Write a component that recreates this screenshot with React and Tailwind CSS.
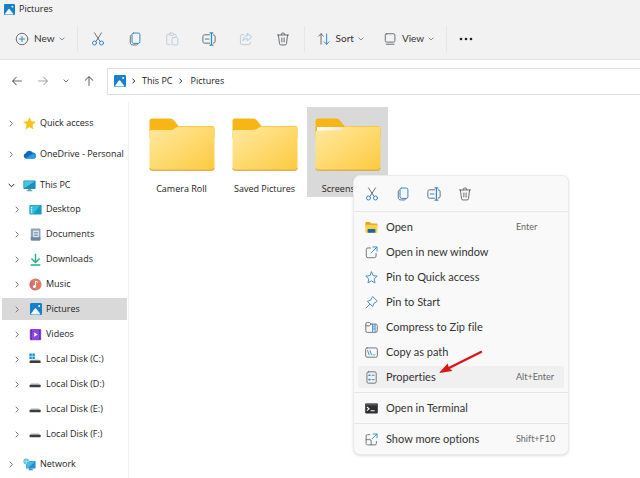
import { useState } from 'react'

const GREY = '#666a6f'
const BLUE = '#2f86c5'

function Icon({ size = 14, box = 16, children }) {
  return (
    <svg width={size} height={size} viewBox={`0 0 ${box} ${box}`} fill="none" stroke={GREY} strokeWidth="1.1"
      strokeLinecap="round" strokeLinejoin="round" className="shrink-0" aria-hidden="true">
      {children}
    </svg>
  )
}

function Chevron({ dir = 'right', size = 6, color = '#6e6e6e', width = 1 }) {
  const d = dir === 'right' ? 'M2 0.8 L5 4 L2 7.2' : 'M0.8 2.2 L4 5.4 L7.2 2.2'
  return (
    <svg width={size} height={size} viewBox="0 0 8 8" fill="none" stroke={color} strokeWidth={width * 8 / size}
      className="shrink-0" aria-hidden="true">
      <path d={d} />
    </svg>
  )
}

const CutIcon = () => (
  <Icon>
    <path d="M4 1 L10.2 10.6 M12 1 L5.8 10.6" />
    <circle cx="4" cy="12.6" r="2.3" stroke={BLUE} />
    <circle cx="12" cy="12.6" r="2.3" stroke={BLUE} />
  </Icon>
)

const CopyIcon = () => (
  <Icon>
    <path d="M3.8 3.4 C2.8 3.8 2.6 4.4 2.6 5.2 V11.6 C2.6 13.8 3.6 14.8 5.6 14.8 H9.4 C10.6 14.8 11.2 14.4 11.6 13.4" />
    <rect x="4.6" y="1.2" width="9" height="11.8" rx="1.8" stroke={BLUE} />
  </Icon>
)

const PasteIcon = () => (
  <Icon>
    <g stroke="#c3c9cf">
      <path d="M6 14.5 H3.2 A1.2 1.2 0 0 1 2 13.3 V3.8 A1.2 1.2 0 0 1 3.2 2.6 H5 M9.6 2.6 H11.4 A1.2 1.2 0 0 1 12.6 3.8 V5" />
      <rect x="5" y="1.2" width="4.8" height="2.6" rx="1.2" />
      <rect x="8" y="6.4" width="6.6" height="8.4" rx="1.2" stroke="#b4d0e6" />
    </g>
  </Icon>
)

const RenameIcon = () => (
  <Icon>
    <path d="M8.6 3.2 H3 A2 2 0 0 0 1 5.2 V10.8 A2 2 0 0 0 3 12.8 H8.6" />
    <path d="M13 3.2 A2 2 0 0 1 15 5.2 V10.8 A2 2 0 0 1 13 12.8" />
    <path d="M9.2 1 H12.4 M9.2 15 H12.4 M10.8 1 V15 M3.8 8 H8" stroke={BLUE} strokeWidth="1.4" />
  </Icon>
)

const ShareIcon = () => (
  <Icon>
    <path d="M5.6 3 H3.6 A2 2 0 0 0 1.6 5 V12.4 A2 2 0 0 0 3.6 14.4 H11 A2 2 0 0 0 13 12.4 V11.6" stroke="#c3c9cf" />
    <path d="M9.6 1.6 L14.6 5.8 L9.6 10 V7.6 C7.2 7.4 5.8 8.2 4.4 10 C4.8 6.6 6.6 4.4 9.6 4.2 Z" stroke="#a9cbe5" />
  </Icon>
)

const DeleteIcon = () => (
  <Icon>
    <path d="M1.6 3.4 H14.4 M5.8 3.2 A2.2 2.2 0 0 1 10.2 3.2 M2.8 3.6 L4 13.4 A1.6 1.6 0 0 0 5.6 14.8 H10.4 A1.6 1.6 0 0 0 12 13.4 L13.2 3.6 M6.7 6.8 V11.4 M9.3 6.8 V11.4" />
  </Icon>
)

const NewIcon = () => (
  <Icon>
    <circle cx="8" cy="8" r="6.6" />
    <path d="M8 5 V11 M5 8 H11" stroke={BLUE} />
  </Icon>
)

const SortIcon = () => (
  <Icon>
    <path d="M4.6 13.8 V2 M1.8 4.8 L4.6 2 L7.4 4.8" />
    <path d="M11 2.2 V14 M8.2 11.2 L11 14 L13.8 11.2" stroke={BLUE} />
  </Icon>
)

const ViewIcon = () => (
  <Icon>
    <rect x="2.6" y="2" width="11" height="9.6" rx="1.6" />
    <path d="M3.6 14 H12.6" />
  </Icon>
)

function PictureIcon({ size = 12 }) {
  return (
    <svg width={size} height={size} viewBox="0 0 12 12" className="shrink-0" aria-hidden="true">
      <rect width="12" height="12" rx="1.2" fill="#1680cc" />
      <path d="M0.8 11 L4.9 5.6 Q5.5 4.9 6.1 5.6 L10.4 11 Q10 11.4 9.4 11.4 H1.8 Q1 11.4 0.8 11 Z" fill="#f2f9fe" />
      <circle cx="9.2" cy="2.9" r="1" fill="#f2f9fe" />
    </svg>
  )
}

function Small({ children }) {
  return <svg width="13" height="13" viewBox="0 0 13 13" className="shrink-0" aria-hidden="true">{children}</svg>
}

const StarIcon = () => (
  <Small>
    <path d="M6.5 0.8 L8.2 4.6 L12.3 5 L9.2 7.8 L10.1 12 L6.5 9.8 L2.9 12 L3.8 7.8 L0.7 5 L4.8 4.6 Z" fill="#fcc21b" stroke="#fcc21b" strokeWidth="0.6" strokeLinejoin="round" />
  </Small>
)

const CloudIcon = () => (
  <Small>
    <path d="M3 10.6 A2.8 2.8 0 0 1 2.6 5.2 A4 4 0 0 1 9.6 4.6 A3 3 0 0 1 10.4 10.6 Z" fill="#0f6cbd" />
    <path d="M2.4 10.4 L9 6.2 A2.6 2.6 0 1 1 10.4 10.8 H3.2 Z" fill="#2a9be8" />
  </Small>
)

const PcIcon = () => (
  <Small>
    <rect x="0.4" y="1.4" width="12.2" height="8.6" rx="0.8" fill="#1b8fb8" />
    <path d="M1.2 2.2 H11.8 L1.2 9.2 Z" fill="#45c7e0" />
    <path d="M5 10 H8 V11.4 H5 Z" fill="#8ea3ae" />
    <path d="M3.6 11.3 H9.4 V12.2 H3.6 Z" fill="#657882" />
  </Small>
)

const DesktopIcon = () => (
  <Small>
    <rect x="0.4" y="2" width="12.2" height="9.4" rx="1" fill="#169bc4" />
    <path d="M0.8 2.4 H11 L4 11 H0.8 Z" fill="#35bfdc" />
    <path d="M2 4 H3.2 V5.2 H2 Z M2 6.2 H3.2 V7.4 H2 Z M2 8.4 H3.2 V9.6 H2 Z" fill="#fff" />
  </Small>
)

const DocumentIcon = () => (
  <Small>
    <rect x="1.8" y="0.6" width="9.6" height="11.8" rx="1" fill="#8ea2ba" />
    <path d="M1.8 9 H11.4 V11.4 Q11.4 12.4 10.4 12.4 H2.8 Q1.8 12.4 1.8 11.4 Z" fill="#70869f" />
    <rect x="4.2" y="2.6" width="5.6" height="6.6" fill="#e6eef6" />
    <path d="M5 4.4 H9 M5 6 H9 M5 7.6 H9" stroke="#6f87a6" strokeWidth="0.8" />
  </Small>
)

const DownloadIcon = () => (
  <Small>
    <path d="M6.5 0.8 V9.4 M2.4 5.6 L6.5 9.6 L10.6 5.6 M1.6 12 H11.4" fill="none" stroke="#1fae8c" strokeWidth="1.4" />
  </Small>
)

const MusicIcon = () => (
  <Small>
    <circle cx="6.5" cy="6.5" r="6" fill="#dc7b62" />
    <path d="M2.2 2.3 A6 6 0 0 0 6.5 12.5 Z" fill="#c25f8b" opacity="0.5" />
    <circle cx="5.4" cy="8.6" r="1.5" fill="#fff" />
    <path d="M6.5 8.6 V3 L9 4.3" fill="none" stroke="#fff" strokeWidth="1" />
  </Small>
)

const VideoIcon = () => (
  <Small>
    <rect x="0.8" y="1" width="11.4" height="11.2" rx="1.2" fill="#8a46dd" />
    <path d="M2.4 2 V12 M10.6 2 V12" stroke="#55229f" strokeWidth="1.2" strokeDasharray="1.4 1.2" />
    <path d="M5.2 4.4 L8.8 6.6 L5.2 8.8 Z" fill="#fff" />
  </Small>
)

const DiskIcon = () => (
  <Small>
    <path d="M2 5.2 H10 L11 7.4 H1 Z" fill="#c9c9c9" />
    <rect x="0.6" y="6.8" width="11" height="2.4" rx="0.5" fill="#3a3d40" />
  </Small>
)

const SystemDiskIcon = () => (
  <Small>
    <path d="M0.4 0.6 H2.8 V3 H0.4 Z M3.4 0.6 H5.8 V3 H3.4 Z M0.4 3.6 H2.8 V6 H0.4 Z M3.4 3.6 H5.8 V6 H3.4 Z" fill="#168fdc" />
    <path d="M2.4 6.4 H10 L11 8.2 H1.4 Z" fill="#c9c9c9" />
    <rect x="0.6" y="7.6" width="11" height="2.4" rx="0.5" fill="#3a3d40" />
  </Small>
)

const NetworkIcon = () => (
  <Small>
    <rect x="3" y="3" width="9.6" height="7.4" rx="0.6" fill="#2193cc" />
    <path d="M3.4 3.4 H12 L5 10 H3.4 Z" fill="#4dbbe6" />
    <path d="M6 10.4 H9.4 L10 12.2 H5.4 Z" fill="#4b88aa" />
    <circle cx="3.2" cy="3.4" r="2.8" fill="#55b9dd" />
    <path d="M0.6 3.4 H5.8 M3.2 0.8 V6" stroke="#e2f5fc" strokeWidth="0.6" />
  </Small>
)

const OpenIcon = () => (
  <Small>
    <path d="M0.4 1.8 Q0.4 1 1.2 1 H4.6 L6 2.4 H11.6 Q12.4 2.4 12.4 3.2 V6 H0.4 Z" fill="#e5a50f" />
    <rect x="0.4" y="3.8" width="12" height="8" rx="0.8" fill="#fcd04b" />
    <path d="M2.6 11.8 V9 Q2.6 8 3.6 8 H9.4 Q10.4 8 10.4 9 V11.8 Z" fill="#1a679f" />
  </Small>
)

const NewWindowIcon = () => (
  <Icon size={13}>
    <path d="M6.8 2.4 H3.6 A2 2 0 0 0 1.6 4.4 V12.4 A2 2 0 0 0 3.6 14.4 H11.6 A2 2 0 0 0 13.6 12.4 V9.2" />
    <path d="M9.6 1.2 H14.8 V6.4 M14.6 1.4 L7.4 8.6" stroke={BLUE} />
  </Icon>
)

const PinQuickIcon = () => (
  <Icon size={13}>
    <path d="M8 1.2 L10.1 5.7 L15 6.3 L11.4 9.7 L12.3 14.6 L8 12.2 L3.7 14.6 L4.6 9.7 L1 6.3 L5.9 5.7 Z" stroke={BLUE} />
  </Icon>
)

const PinStartIcon = () => (
  <Icon size={13}>
    <path d="M9.8 1 L15 6.2 L13.8 7.4 L11 9 L9.4 13 L3 6.6 L7 5 L8.6 2.2 Z" stroke={BLUE} />
    <path d="M5.8 10.2 L1.2 14.8" />
  </Icon>
)

const ZipIcon = () => (
  <Icon size={13}>
    <path d="M8.6 14 H2.8 A1.8 1.8 0 0 1 1 12.2 V3.6 A1.8 1.8 0 0 1 2.8 1.8 H5.4 L7.4 3.8 H13.2 A1.8 1.8 0 0 1 15 5.6 V12.2 A1.8 1.8 0 0 1 13.2 14 H12.6 M1 6 H5.4 L7.4 3.8" />
    <path d="M9.4 4 V14 H12.4 V4 M11 6 V7.4 M11 9 V10.4" stroke={BLUE} />
  </Icon>
)

const CopyPathIcon = () => (
  <Icon size={13}>
    <rect x="0.8" y="2.4" width="14.4" height="11.4" rx="1.8" />
    <path d="M3.2 5.6 L5 10.8 M6.2 5.6 L8 10.8 M10 10.8 H10.2 M12 10.8 H12.2" stroke={BLUE} />
  </Icon>
)

const PropertiesIcon = () => (
  <Icon size={13}>
    <rect x="2.4" y="1" width="11.4" height="14" rx="1.8" />
    <path d="M5 5.2 H6 M5 10.6 H6" stroke={BLUE} strokeWidth="2" />
    <path d="M8.8 5.2 H11.2 M8.8 10.6 H11.2" stroke={BLUE} strokeWidth="1.1" />
  </Icon>
)

const TerminalIcon = () => (
  <Small>
    <rect x="0.2" y="1.4" width="12.6" height="10" rx="0.8" fill="#2d2f31" />
    <path d="M0.6 1.6 H12.4 V3.4 H0.6 Z" fill="#55585b" />
    <path d="M2 5 L4 6.8 L2 8.6 M5.6 8.8 H9.6" fill="none" stroke="#fff" strokeWidth="1.1" />
  </Small>
)

const MoreOptionsIcon = () => (
  <Icon size={13}>
    <path d="M5.8 2 H3 A1.6 1.6 0 0 0 1.4 3.6 V13 A1.6 1.6 0 0 0 3 14.6 H12.4 A1.6 1.6 0 0 0 14 13 V10.4 M1.4 8.2 H6 A1.6 1.6 0 0 1 7.6 9.8 V14.6" />
    <path d="M10 1.2 H14.8 V6 M14.6 1.4 L9 7" stroke={BLUE} />
  </Icon>
)

function Folder({ open }) {
  const id = open ? 'folder-open' : 'folder'
  return (
    <svg width="66" height="53" viewBox="0 0 66 53" aria-hidden="true">
      <defs>
        <linearGradient id={id} x1="0" y1="0" x2="1" y2="1">
          <stop offset="0" stopColor="#ffe9a0" />
          <stop offset="1" stopColor="#fdca3f" />
        </linearGradient>
        <linearGradient id="paper" x1="0" y1="0" x2="1" y2="0">
          <stop offset="0" stopColor="#fff" />
          <stop offset="1" stopColor="#ece6d2" />
        </linearGradient>
      </defs>
      <path d="M0.5 3 Q0.5 0.5 3 0.5 H21 Q23.5 0.5 25 2.5 L29.5 8 H63 Q65.5 8 65.5 10.5 V20 H0.5 Z" fill="#f7b516" />
      {open && <path d="M2 9 H29 L26 14 H2 Z" fill="url(#paper)" />}
      <path d={open
        ? 'M0.5 15 Q0.5 12.6 3 12.6 H24 Q26 12.6 27 11 L28 9.6 Q29 8.6 31 8.6 H63 Q65.5 8.6 65.5 11 V50 Q65.5 52.5 63 52.5 H3 Q0.5 52.5 0.5 50 Z'
        : 'M0.5 14.5 Q0.5 12 3 12 H21 Q23.5 12 25.5 10.4 L27 9.4 Q28.4 8.4 30 8.4 H63 Q65.5 8.4 65.5 11 V50 Q65.5 52.5 63 52.5 H3 Q0.5 52.5 0.5 50 Z'}
        fill={`url(#${id})`} />
      <path d="M0.8 50.4 Q1.2 52.2 3 52.2 H63 Q64.8 52.2 65.2 50.4" fill="none" stroke="#cf9d33" />
    </svg>
  )
}

const tools = [
  { label: 'Cut', icon: CutIcon },
  { label: 'Copy', icon: CopyIcon },
  { label: 'Paste', icon: PasteIcon, disabled: true },
  { label: 'Rename', icon: RenameIcon },
  { label: 'Share', icon: ShareIcon, disabled: true },
  { label: 'Delete', icon: DeleteIcon },
]

const drives = [
  { label: 'Desktop', icon: DesktopIcon },
  { label: 'Documents', icon: DocumentIcon },
  { label: 'Downloads', icon: DownloadIcon },
  { label: 'Music', icon: MusicIcon },
  { label: 'Pictures', icon: PictureIcon },
  { label: 'Videos', icon: VideoIcon },
  { label: 'Local Disk (C:)', icon: SystemDiskIcon },
  { label: 'Local Disk (D:)', icon: DiskIcon },
  { label: 'Local Disk (E:)', icon: DiskIcon },
  { label: 'Local Disk (F:)', icon: DiskIcon },
]

const folders = ['Camera Roll', 'Saved Pictures', 'Screenshots']

const menuGroups = [
  [
    { label: 'Open', icon: OpenIcon, keys: 'Enter' },
    { label: 'Open in new window', icon: NewWindowIcon },
    { label: 'Pin to Quick access', icon: PinQuickIcon },
    { label: 'Pin to Start', icon: PinStartIcon },
    { label: 'Compress to Zip file', icon: ZipIcon },
    { label: 'Copy as path', icon: CopyPathIcon },
    { label: 'Properties', icon: PropertiesIcon, keys: 'Alt+Enter', active: true },
  ],
  [{ label: 'Open in Terminal', icon: TerminalIcon }],
  [{ label: 'Show more options', icon: MoreOptionsIcon, keys: 'Shift+F10' }],
]

function ToolMenu({ label, icon: ToolIcon }) {
  return (
    <button className="flex items-center font-['Lato','Open_Sans',sans-serif] text-[10px] text-[#333]">
      <ToolIcon />
      <span className="ml-[5px] mr-[4px]">{label}</span>
      <Chevron dir="down" color="#8a8a8a" />
    </button>
  )
}

function Separator() {
  return <div className="h-[26px] w-px shrink-0 bg-[#e6e6e6]" />
}

function TreeItem({ label, icon: ItemIcon, nested, expanded, active, onClick }) {
  return (
    <button onClick={onClick}
      className={`flex h-[22px] w-full items-center whitespace-nowrap text-left ${nested ? 'pl-[12px]' : 'pl-[6px]'} ${active ? 'bg-[#d9d9d9]' : ''}`}>
      <Chevron dir={expanded ? 'down' : 'right'} size={7} color={expanded ? '#222' : '#777'} />
      <span className="ml-[7px] flex w-[15px] justify-center"><ItemIcon /></span>
      <span className="ml-[3px]">{label}</span>
    </button>
  )
}

function ContextMenu() {
  return (
    <div role="menu" className="absolute left-[353px] top-[175px] w-[216px] rounded-[7px] border border-[#ebebeb] bg-[#f9f9f9] font-['Lato','Open_Sans',sans-serif] [font-variant-ligatures:none] shadow-sm">
      <div className="flex h-[36px] items-center gap-[17px] border-b border-[#e6e6e6] pl-[11px]">
        {tools.filter(t => !t.disabled).map(({ label, icon: ToolIcon }) => (
          <button key={label} aria-label={label}><ToolIcon /></button>
        ))}
      </div>
      {menuGroups.map((group, i) => (
        <div key={i} className={`flex flex-col gap-[3px] px-[4px] py-[4px] ${i > 0 ? 'border-t border-[#e6e6e6]' : ''}`}>
          {group.map(({ label, icon: ItemIcon, keys, active }) => (
            <button key={label} role="menuitem"
              className={`flex h-[22px] items-center rounded-[3px] pl-[7px] text-left text-[11px] text-[#333] ${active ? 'bg-[#f0f0f0]' : ''}`}>
              <ItemIcon />
              <span className="ml-[8px] flex-1 whitespace-nowrap">{label}</span>
              {keys && <span className="w-[48px] whitespace-nowrap text-[9px] text-[#666]">{keys}</span>}
            </button>
          ))}
        </div>
      ))}
      <svg width="46" height="28" viewBox="0 0 46 28" className="absolute left-[84px] top-[174px]" aria-hidden="true">
        <path d="M43 2 L11 18" stroke="#dc1317" strokeWidth="2.4" strokeLinecap="round" />
        <path d="M1 23 L9.6 13.4 L11 18 L14.4 21 Z" fill="#dc1317" />
      </svg>
    </div>
  )
}

export default function App() {
  const [place, setPlace] = useState('Pictures')
  const [selected, setSelected] = useState('Screenshots')

  return (
    <div className="relative flex min-h-screen flex-col overflow-hidden bg-white font-['Open_Sans','Noto_Sans',sans-serif] text-[9px] text-[#222]">
      <header className="border-b border-[#e2e2e2] bg-[#f2f2f2]">
        <div className="flex h-[18px] items-center gap-[4px] pl-[4px]">
          <PictureIcon size={11} />
          <h1>Pictures</h1>
        </div>
        <div className="flex h-[41px] items-center pl-[15px]">
          <ToolMenu label="New" icon={NewIcon} />
          <div className="ml-[12px] flex items-center">
            <Separator />
            <div className="flex px-[2px]">
              {tools.map(({ label, icon: ToolIcon, disabled }) => (
                <button key={label} aria-label={label} disabled={disabled} className="flex w-[37px] justify-center">
                  <ToolIcon />
                </button>
              ))}
            </div>
            <Separator />
          </div>
          <div className="ml-[12px] mr-[12px] flex gap-[19px]">
            <ToolMenu label="Sort" icon={SortIcon} />
            <ToolMenu label="View" icon={ViewIcon} />
          </div>
          <Separator />
          <button aria-label="More" className="ml-[12px]">
            <svg width="14" height="4" viewBox="0 0 14 4" fill="#222">
              <circle cx="2" cy="2" r="1.3" />
              <circle cx="7" cy="2" r="1.3" />
              <circle cx="12" cy="2" r="1.3" />
            </svg>
          </button>
        </div>
      </header>

      <div className="flex h-[42px] items-center">
        <div className="flex w-[107px] shrink-0 items-center gap-[14px] pl-[11px]">
          <button aria-label="Back"><Icon size={12}><path d="M14 8 H2 M7 3 L2 8 L7 13" strokeWidth="1.4" /></Icon></button>
          <button aria-label="Forward"><Icon size={12}><path d="M2 8 H14 M9 3 L14 8 L9 13" strokeWidth="1.4" stroke="#a5a5a5" /></Icon></button>
          <button aria-label="Recent"><Chevron dir="down" /></button>
          <button aria-label="Up"><Icon size={12}><path d="M8 14 V2 M3 7 L8 2 L13 7" strokeWidth="1.4" /></Icon></button>
        </div>
        <div className="flex h-[27px] flex-1 items-center border border-r-0 border-[#dedede] pl-[6px]">
          <PictureIcon />
          <span className="ml-[5px]"><Chevron color="#333" /></span>
          <a href="#this-pc" className="ml-[5px]">This PC</a>
          <span className="ml-[6px]"><Chevron color="#333" /></span>
          <a href="#pictures" className="ml-[6px]">Pictures</a>
        </div>
      </div>

      <div className="flex flex-1">
        <nav className="flex w-[129px] shrink-0 flex-col border-r border-[#f0f0f0] pl-[2px] pr-[1px] pt-[10px]">
          <div className="flex flex-col gap-[9px]">
            <TreeItem label="Quick access" icon={StarIcon} />
            <TreeItem label="OneDrive - Personal" icon={CloudIcon} />
            <TreeItem label="This PC" icon={PcIcon} expanded />
          </div>
          <ul className="mb-[8px] mt-[2px] flex flex-col gap-[3px]">
            {drives.map(d => (
              <li key={d.label}>
                <TreeItem {...d} nested active={place === d.label} onClick={() => setPlace(d.label)} />
              </li>
            ))}
          </ul>
          <TreeItem label="Network" icon={NetworkIcon} />
        </nav>

        <main className="flex flex-1 items-start gap-[2px] pl-[12px] pt-[5px]">
          {folders.map(name => (
            <button key={name} onClick={() => setSelected(name)}
              className={`flex h-[90px] w-[81px] flex-col items-center justify-between pb-[1px] pt-[11px] ${selected === name ? 'bg-[#d9d9d9]' : ''}`}>
              <Folder open={name === 'Screenshots'} />
              <span className="leading-[14px]">{name}</span>
            </button>
          ))}
        </main>
      </div>

      <ContextMenu />
    </div>
  )
}
